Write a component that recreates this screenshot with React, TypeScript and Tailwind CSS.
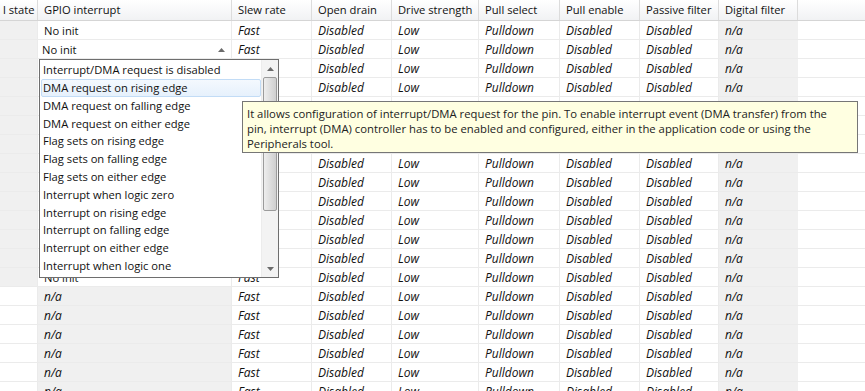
import React from "react";

const cols = [
  { key: "state", w: "w-[38px]", label: "l state" },
  { key: "irq", w: "w-[194px]", label: "GPIO interrupt" },
  { key: "slew", w: "w-[80px]", label: "Slew rate" },
  { key: "od", w: "w-[80px]", label: "Open drain" },
  { key: "ds", w: "w-[87px]", label: "Drive strength" },
  { key: "ps", w: "w-[81px]", label: "Pull select" },
  { key: "pe", w: "w-[80px]", label: "Pull enable" },
  { key: "pf", w: "w-[79px]", label: "Passive filter" },
  { key: "df", w: "w-[79px]", label: "Digital filter" },
];

const values = ["Fast", "Disabled", "Low", "Pulldown", "Disabled", "Disabled", "n/a"];

const options = [
  "Interrupt/DMA request is disabled",
  "DMA request on rising edge",
  "DMA request on falling edge",
  "DMA request on either edge",
  "Flag sets on rising edge",
  "Flag sets on falling edge",
  "Flag sets on either edge",
  "Interrupt when logic zero",
  "Interrupt on rising edge",
  "Interrupt on falling edge",
  "Interrupt on either edge",
  "Interrupt when logic one",
];

const rows = Array.from({ length: 20 }, (_, i) => i);

function Arrow({ up = true }: { up?: boolean }) {
  return (
    <svg width="7" height="4" viewBox="0 0 7 4" className="shrink-0">
      <path d={up ? "M0 4 L3.5 0 L7 4 Z" : "M0 0 L3.5 4 L7 0 Z"} fill="#6b6b6b" />
    </svg>
  );
}

// cells fully covered by the popup list or the tooltip are left empty
function hidden(i: number, k: number) {
  if (k === 1 && i >= 2 && i <= 12) return true;
  if (k === 2 && i >= 2 && i <= 12) return true;
  if (k >= 3 && i >= 4 && i <= 6) return true;
  return false;
}

function Row({ i }: { i: number }) {
  const na = i >= 14;
  return (
    <div className="flex h-[19px] border-b border-[#ebebeb]">
      <div className={`w-[38px] shrink-0 border-r border-[#ebebeb] ${na ? "bg-white" : "bg-[#f0f0f0]"}`} />
      {i === 1 ? (
        <div className="w-[194px] shrink-0 flex items-center justify-between pl-[4px] pr-[6px] pt-px bg-white border-r border-[#ebebeb]">
          <span>No init</span>
          <Arrow />
        </div>
      ) : (
        <div
          className={`w-[194px] shrink-0 flex items-center pl-[6px] pt-px border-r border-[#ebebeb] ${
            na ? "bg-[#f0f0f0] italic text-[12px]" : "bg-white"
          }`}
        >
          {hidden(i, 1) ? "" : na ? "n/a" : "No init"}
        </div>
      )}
      {values.map((v, k) => (
        <div
          key={k}
          className={`${cols[k + 2].w} shrink-0 flex items-center pl-[6px] pt-px italic text-[12px] border-r ${
            k === 6 ? "bg-[#f0f0f0] border-[#f0f0f0]" : "border-[#ebebeb]"
          }`}
        >
          {hidden(i, k + 2) ? "" : v}
        </div>
      ))}
      <div className="flex-1" />
    </div>
  );
}

export default function App() {
  return (
    <div
      className="relative w-[865px] h-[391px] overflow-hidden bg-white text-[11.2px] leading-none text-[#111]"
      style={{ fontFamily: '"Segoe UI", "Open Sans", sans-serif' }}
    >
      {/* header */}
      <div className="flex h-[21px] border-b border-[#d5d5d5] bg-gradient-to-b from-white to-[#f1f2f4]">
        {cols.map((c) => (
          <div
            key={c.key}
            className={`${c.w} shrink-0 flex items-center border-r border-[#dcdcdc] ${
              c.key === "state" ? "pl-[3px]" : "pl-[6px]"
            } whitespace-nowrap overflow-hidden`}
          >
            {c.label}
          </div>
        ))}
        <div className="flex-1" />
      </div>

      {rows.map((i) => (
        <Row key={i} i={i} />
      ))}

      {/* dropdown list */}
      <div className="absolute left-[39px] top-[59px] w-[240px] h-[219px] bg-white border border-[#6e6e6e] flex">
        <div className="flex-1 flex flex-col pt-px">
          {options.map((o, k) => (
            <div
              key={o}
              className={`h-[17.8px] flex items-center pl-[2px] ml-px whitespace-nowrap ${
                k === 1
                  ? "bg-gradient-to-b from-[#f4f9fe] to-[#e6f1fc] border border-[#c2dcf6] rounded-[2px] pl-px"
                  : ""
              }`}
            >
              {o}
            </div>
          ))}
        </div>
        <div className="w-[17px] shrink-0 bg-[#f3f3f3] flex flex-col items-center border-l border-[#ececec]">
          <div className="h-[17px] w-full flex items-center justify-center">
            <Arrow />
          </div>
          <div className="w-[14px] h-[134px] rounded-[2px] border border-[#9b9b9b] bg-gradient-to-r from-[#eeeeee] via-[#dedede] to-[#cfcfcf]" />
          <div className="flex-1" />
          <div className="h-[17px] w-full flex items-center justify-center">
            <Arrow up={false} />
          </div>
        </div>
      </div>

      {/* tooltip */}
      <div className="absolute left-[242px] top-[101px] w-[616px] h-[52px] bg-[#ffffe1] border border-[#767676] pl-[4px] pt-[4px] leading-[15px] text-[11.3px] text-[#222]">
        <div className="whitespace-nowrap">
          It allows configuration of interrupt/DMA request for the pin. To enable interrupt event (DMA transfer) from the
        </div>
        <div className="whitespace-nowrap">
          pin, interrupt (DMA) controller has to be enabled and configured, either in the application code or using the
        </div>
        <div className="whitespace-nowrap">Peripherals tool.</div>
      </div>
    </div>
  );
}
